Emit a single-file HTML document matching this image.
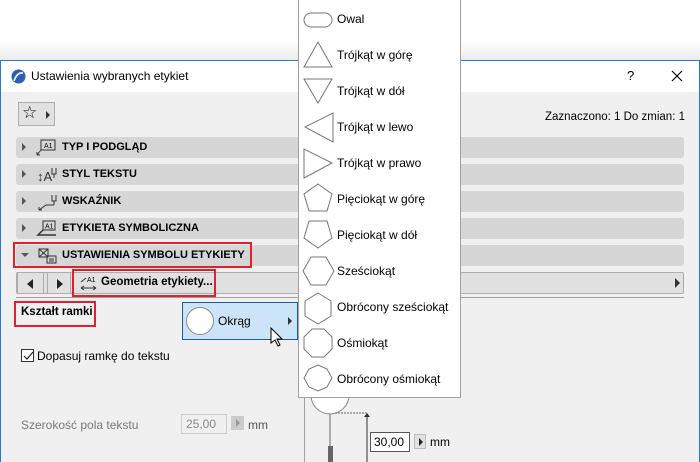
<!DOCTYPE html>
<html><head><meta charset="utf-8"><style>
*{margin:0;padding:0;box-sizing:border-box}
body{width:700px;height:462px;position:relative;overflow:hidden;background:#fff;font-family:"Liberation Sans",sans-serif;font-size:12px;color:#000}
.a{position:absolute;white-space:nowrap}
.dlg{left:0;top:60px;width:700px;height:402px;border:1px solid #2b78d0;border-bottom:none;background:#f0f0f0}
.tb{left:0;top:0;width:698px;height:31px;background:#fff}
.hdr{left:16px;width:668px;height:21px;background:#d6d6d6;border-radius:3px}
.hdr .t{position:absolute;left:46px;top:4px;font-weight:bold;font-size:11px;white-space:nowrap}
.tri{position:absolute;left:6px;top:6px;width:0;height:0;border-left:4px solid #555;border-top:4px solid transparent;border-bottom:4px solid transparent}
.btn{background:#e1e1e1;border:1px solid #adadad}
.mi{position:absolute;left:38px;font-size:12px;white-space:nowrap}
</style></head><body>
<div class="a" style="left:0;top:40px;width:700px;height:20px;background:linear-gradient(#fff,#ececec)"></div>
<div class="a dlg">
 <div class="a tb">
  <svg class="a" style="left:10px;top:8px" width="15" height="15"><circle cx="7.5" cy="7.5" r="7" fill="#2d5fb6"/><path d="M3 12 Q6 3 12 4" stroke="#fff" stroke-width="1.6" fill="none"/></svg>
  <div class="a" style="left:30px;top:8px">Ustawienia wybranych etykiet</div>
  <div class="a" style="left:626px;top:7px;font-size:13px">?</div>
  <svg class="a" style="left:670px;top:9px" width="12" height="12"><path d="M1 1L11 11M11 1L1 11" stroke="#000" stroke-width="1.1"/></svg>
 </div>
 <div class="a btn" style="left:17px;top:41px;width:37px;height:24px"><span class="a" style="left:3px;top:0;font-size:17px">☆</span><div class="a" style="left:27px;top:8px;border-left:4px solid #333;border-top:4px solid transparent;border-bottom:4px solid transparent"></div></div>
 <div class="a" style="right:14px;top:50px;font-size:11.5px">Zaznaczono: 1 Do zmian: 1</div>
</div>
<div class="a hdr" style="top:137px"><div class="tri"></div><svg class="a" style="left:20px;top:2px" width="22" height="18"><rect x="5" y="1" width="14" height="10" fill="none" stroke="#333"/><text x="8" y="9" font-size="7">A1</text><path d="M5 11L1 16M1 16h3M1 16v-3" stroke="#333" fill="none"/></svg><span class="t">TYP I PODGLĄD</span></div>
<div class="a hdr" style="top:164px"><div class="tri"></div><svg class="a" style="left:20px;top:2px" width="22" height="18"><text x="1" y="15" font-size="13" fill="#333">↕A</text><path d="M16 2v6h4v-6M18 8v4" stroke="#333" fill="none"/></svg><span class="t">STYL TEKSTU</span></div>
<div class="a hdr" style="top:191px"><div class="tri"></div><svg class="a" style="left:20px;top:2px" width="22" height="18"><path d="M16 2v6h4v-6M18 8v4M18 12h-8L3 17M3 17h3M3 17v-3" stroke="#333" fill="none"/></svg><span class="t">WSKAŹNIK</span></div>
<div class="a hdr" style="top:218px"><div class="tri"></div><svg class="a" style="left:20px;top:2px" width="22" height="18"><rect x="7" y="1" width="12" height="9" fill="none" stroke="#333"/><text x="9" y="8.5" font-size="7">A1</text><path d="M7 10L2 15h18" stroke="#333" stroke-width="1.5" fill="none"/></svg><span class="t">ETYKIETA SYMBOLICZNA</span></div>
<div class="a hdr" style="top:245px"><div class="tri" style="left:5px;top:8px;border-left:4px solid transparent;border-right:4px solid transparent;border-top:4px solid #555;border-bottom:none"></div><svg class="a" style="left:20px;top:2px" width="22" height="18"><rect x="3" y="2" width="9" height="8" fill="none" stroke="#333"/><path d="M3 2l9 8M12 2l-9 8" stroke="#333"/><rect x="11" y="9" width="9" height="7" fill="none" stroke="#333"/><path d="M13 12h5M13 14h5" stroke="#333"/></svg><span class="t">USTAWIENIA SYMBOLU ETYKIETY</span></div>
<div class="a" style="left:13px;top:242px;width:239px;height:26px;border:2px solid #e0202a"></div>
<div class="a btn" style="left:16px;top:272px;width:668px;height:22px;border-radius:2px"></div>
<div class="a btn" style="left:17px;top:272px;width:27px;height:22px"><div class="a" style="left:9px;top:6px;border-right:6px solid #222;border-top:5px solid transparent;border-bottom:5px solid transparent"></div></div>
<div class="a btn" style="left:47px;top:272px;width:24px;height:22px"><div class="a" style="left:9px;top:6px;border-left:6px solid #222;border-top:5px solid transparent;border-bottom:5px solid transparent"></div></div>
<div class="a" style="left:72px;top:269px;width:144px;height:28px;border:2px solid #e0202a"></div>
<svg class="a" style="left:80px;top:275px" width="18" height="16"><text x="7" y="7" font-size="7">A1</text><path d="M1 7l5-4M1 13h15M1 13l3-2M1 13l3 2M16 13l-3-2M16 13l-3 2" stroke="#333" fill="none"/></svg>
<div class="a" style="left:101px;top:276px;font-weight:bold;font-size:11.5px">Geometria etykiety...</div>
<div class="a" style="left:675px;top:278px;border-left:5px solid #333;border-top:5px solid transparent;border-bottom:5px solid transparent"></div>
<div class="a" style="left:16px;top:297px;width:668px;height:1px;background:#a0a0a0"></div>
<div class="a" style="left:14px;top:301px;width:82px;height:26px;border:2px solid #e0202a"></div>
<div class="a" style="left:21px;top:306px;font-weight:bold;font-size:11.5px">Kształt ramki</div>
<div class="a" style="left:182px;top:302px;width:116px;height:38px;background:#cce4f7;border:1px solid #1d5fa0"></div>
<svg class="a" style="left:184px;top:305px" width="32" height="32"><circle cx="16" cy="16" r="13.5" fill="#fff" stroke="#888"/></svg>
<div class="a" style="left:218px;top:314px">Okrąg</div>
<div class="a" style="left:288px;top:317px;border-left:4px solid #333;border-top:4px solid transparent;border-bottom:4px solid transparent"></div>
<svg class="a" style="left:270px;top:327px" width="16" height="22"><path d="M1 1v15l4-3 3 6 2-1-3-6h5z" fill="#fff" stroke="#000"/></svg>
<div class="a" style="left:21px;top:349px;width:13px;height:13px;border:1px solid #333;background:#fff"></div>
<svg class="a" style="left:22px;top:350px" width="12" height="12"><path d="M2 6l3 3 6-7" stroke="#222" fill="none" stroke-width="1.2"/></svg>
<div class="a" style="left:37px;top:349px">Dopasuj ramkę do tekstu</div>
<div class="a" style="left:21px;top:418px;color:#7a7a7a">Szerokość pola tekstu</div>
<div class="a" style="left:181px;top:414px;width:46px;height:20px;border:1px solid #ccc;color:#888;padding:2px 4px">25,00</div>
<div class="a" style="left:231px;top:416px;width:13px;height:14px;background:#ccc"><div class="a" style="left:5px;top:3px;border-left:4px solid #999;border-top:4px solid transparent;border-bottom:4px solid transparent"></div></div>
<div class="a" style="left:248px;top:418px;color:#555">mm</div>
<div class="a" style="left:304px;top:298px;width:1px;height:164px;background:#a0a0a0"></div>
<svg class="a" style="left:305px;top:380px" width="150" height="82"><circle cx="25" cy="15" r="19" fill="#fff" stroke="#888"/><path d="M25 34V82" stroke="#666"/><rect x="23" y="66" width="5" height="16" fill="#666"/><path d="M30 33h32" stroke="#666" stroke-dasharray="2 1"/><path d="M62 35V82" stroke="#333"/><path d="M59 37l3-4 3 4z" fill="#333"/></svg>
<div class="a" style="left:370px;top:432px;width:40px;height:20px;border:1px solid #555;background:#fff;padding:2px 3px">30,00</div>
<div class="a" style="left:414px;top:434px;width:12px;height:15px;background:#e1e1e1;border:1px solid #bbb"><div class="a" style="left:4px;top:3px;border-left:4px solid #222;border-top:4px solid transparent;border-bottom:4px solid transparent"></div></div>
<div class="a" style="left:430px;top:435px">mm</div>
<div class="a" style="left:298px;top:-1px;width:163px;height:399px;background:#fff;border:1px solid #a0a0a0">
<svg class="a" style="left:0;top:0" width="40" height="398" fill="none" stroke="#777">
<rect x="5" y="13" width="28" height="14" rx="7"/>
<path d="M19 42L5 67h28z"/>
<path d="M5 79h28L19 103z"/>
<path d="M34 113v29L6 127z"/>
<path d="M5 149v29l28-15z"/>
<path d="M19 184l14 10-5 17H10L5 194z"/>
<path d="M19 248l14-10-5-17H10L5 238z"/>
<path d="M4 271l8-14h15l8 14-8 14H12z"/>
<path d="M19 293l13 8v15l-13 8-13-8v-15z"/>
<path d="M13 329h12l8 8v12l-8 8H13l-8-8v-12z"/>
<path d="M19 365l9 4 5 9-5 9-9 4-9-4-5-9 5-9z"/>
</svg>
<div class="mi" style="top:12px">Owal</div>
<div class="mi" style="top:48px">Trójkąt w górę</div>
<div class="mi" style="top:84px">Trójkąt w dół</div>
<div class="mi" style="top:120px">Trójkąt w lewo</div>
<div class="mi" style="top:156px">Trójkąt w prawo</div>
<div class="mi" style="top:192px">Pięciokąt w górę</div>
<div class="mi" style="top:228px">Pięciokąt w dół</div>
<div class="mi" style="top:264px">Sześciokąt</div>
<div class="mi" style="top:300px">Obrócony sześciokąt</div>
<div class="mi" style="top:336px">Ośmiokąt</div>
<div class="mi" style="top:372px">Obrócony ośmiokąt</div>
</div>
</body></html>
